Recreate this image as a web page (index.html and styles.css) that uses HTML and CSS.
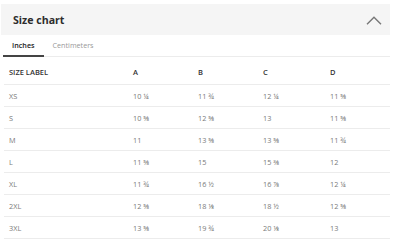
FILE: index.html
```html
<!DOCTYPE html>
<html>
<head>
<meta charset="utf-8">
<link rel="stylesheet" href="styles.css">
</head>
<body>
<div class="panel">
  <div class="head">
    <h2 class="title">Size chart</h2>
    <svg class="chev" width="16" height="9" viewBox="0 0 16 9"><path d="M1 8.2 L8 1.2 L15 8.2" fill="none" stroke="#777" stroke-width="1.4"/></svg>
  </div>
  <div class="tabs">
    <span class="tab active">Inches</span>
    <span class="tab">Centimeters</span>
  </div>
  <div class="table">
    <div class="row hrow"><span>SIZE LABEL</span><span>A</span><span>B</span><span>C</span><span>D</span></div>
    <div class="row"><span>XS</span><span>10 ¼</span><span>11 ¾</span><span>12 ¼</span><span>11 ⅝</span></div>
    <div class="row"><span>S</span><span>10 ⅝</span><span>12 ⅝</span><span>13</span><span>11 ⅝</span></div>
    <div class="row"><span>M</span><span>11</span><span>13 ⅝</span><span>13 ⅝</span><span>11 ¾</span></div>
    <div class="row"><span>L</span><span>11 ⅝</span><span>15</span><span>15 ⅜</span><span>12</span></div>
    <div class="row"><span>XL</span><span>11 ¾</span><span>16 ½</span><span>16 ⅞</span><span>12 ¼</span></div>
    <div class="row"><span>2XL</span><span>12 ⅝</span><span>18 ⅛</span><span>18 ½</span><span>12 ⅝</span></div>
    <div class="row"><span>3XL</span><span>13 ⅝</span><span>19 ¾</span><span>20 ⅛</span><span>13</span></div>
  </div>
</div>
</body>
</html>
```
FILE: styles.css
```css
* { box-sizing: border-box; }
html, body { margin: 0; padding: 0; background: #fff; }
body {
  font-family: "Open Sans", "Liberation Sans", sans-serif;
  color: #333;
  overflow: hidden;
}
.panel {
  width: 390px;
  padding-top: 4px;
}
.head {
  height: 31px;
  margin-left: 1px;
  background: #f5f5f5;
  display: flex;
  align-items: center;
  justify-content: space-between;
  padding: 0 8px 0 12px;
}
.title {
  margin: 0;
  font-size: 10.6px;
  font-weight: 700;
  color: #2d2d2d;
}
.chev { display: block; margin-top: 1px; }
.tabs {
  margin-left: 3px;
  height: 22px;
  display: flex;
  align-items: stretch;
  border-bottom: 1px solid #ececec;
}
.tab {
  font-size: 7.2px;
  color: #999;
  padding: 0 8px 0 9px;
  display: flex;
  align-items: center;
  margin-bottom: -1px;
  border-bottom: 2px solid transparent;
}
.tab.active {
  color: #222;
  font-weight: 600;
  border-bottom-color: #444;
  padding-right: 9px;
}
.table {
  margin-left: 4px;
}
.row {
  display: grid;
  grid-template-columns: 124px 65px 65px 67px 1fr;
  height: 22px;
  align-items: center;
  border-bottom: 1px solid #ececec;
  font-size: 7.3px;
  color: #7a7a7a;
}
.row span { padding-left: 5px; }
.hrow {
  height: 28px;
  padding-top: 2px;
  color: #333;
  font-weight: 600;
  font-size: 7.5px;
}
```
